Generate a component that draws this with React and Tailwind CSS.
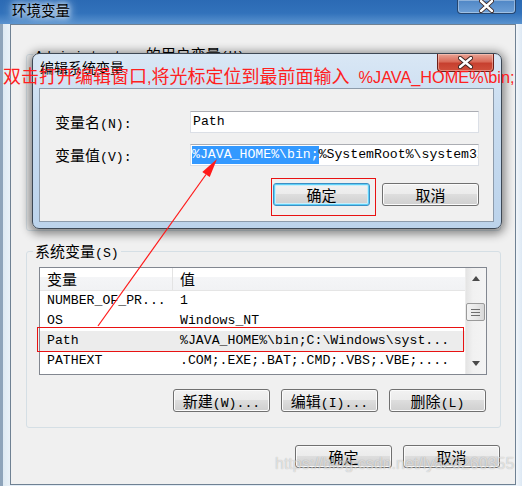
import React from "react";

const CJK = /[\u3000-\u9fff\uff00-\uffef]/;

function W({ t }) {
  const parts = t.match(/[\u3000-\u9fff\uff00-\uffef]+|[^\u3000-\u9fff\uff00-\uffef]+/g) || [];
  return (
    <span className="inline-flex items-baseline h-[16px] leading-[16px] align-top whitespace-pre">
      {parts.map((p, i) =>
        CJK.test(p) ? (
          <span key={i} className="font-['Noto_Sans_CJK_SC',sans-serif] text-[15px] leading-[16px]">
            {p}
          </span>
        ) : (
          <span key={i} className="font-['Liberation_Mono',monospace] text-[13.2px] leading-[16px] whitespace-pre">
            {p}
          </span>
        )
      )}
    </span>
  );
}

function Btn({ t, focus }) {
  return (
    <div
      className={
        focus
          ? "w-[97px] h-[23px] rounded-[3px] border border-[#3c8fc4] shadow-[inset_0_0_0_1px_#5fd0f7,inset_0_0_0_2px_#c9eefb] bg-[linear-gradient(#f2f2f2_0%,#ebebeb_49%,#dddddd_50%,#cfcfcf_100%)] flex items-center justify-center whitespace-nowrap text-black"
          : "w-[97px] h-[23px] rounded-[3px] border border-[#707070] shadow-[inset_0_0_0_1px_#fbfbfb] bg-[linear-gradient(#f2f2f2_0%,#ebebeb_49%,#dddddd_50%,#cfcfcf_100%)] flex items-center justify-center whitespace-nowrap text-black"
      }
    >
      <W t={t} />
    </div>
  );
}

const rows = [
  ["NUMBER_OF_PR...", "1"],
  ["OS", "Windows_NT"],
  ["Path", "%JAVA_HOME%\\bin;C:\\Windows\\syst..."],
  ["PATHEXT", ".COM;.EXE;.BAT;.CMD;.VBS;.VBE;...."],
];

function Scrollbar() {
  return (
    <div className="w-[21px] flex flex-col bg-[linear-gradient(90deg,#e4e4e4_0%,#f1f1f1_35%,#f4f4f4_100%)] border-l border-[#ececec]">
      <div className="h-[17px] flex items-center justify-center pt-[3px]">
        <svg width="8" height="5" viewBox="0 0 8 5">
          <polygon points="0,5 8,5 4,0" fill="#4a4a4a" />
        </svg>
      </div>
      <div className="mt-[18px] w-[19px] h-[18px] rounded-[2px] border border-[#9a9a9a] bg-[linear-gradient(90deg,#f3f3f3_0%,#e9e9e9_50%,#d8d8d8_100%)] flex flex-col items-center justify-center gap-[2px]">
        <div className="w-[9px] h-[1px] bg-[#6e6e6e]" />
        <div className="w-[9px] h-[1px] bg-[#6e6e6e]" />
        <div className="w-[9px] h-[1px] bg-[#6e6e6e]" />
      </div>
      <div className="flex-1" />
      <div className="h-[17px] flex items-center justify-center pb-[4px]">
        <svg width="8" height="5" viewBox="0 0 8 5">
          <polygon points="0,0 8,0 4,5" fill="#4a4a4a" />
        </svg>
      </div>
    </div>
  );
}

function CloseX({ w = 12, h = 10 }) {
  return (
    <svg width={w + 4} height={h + 4} viewBox={`-2 -2 ${w + 4} ${h + 4}`}>
      <path d={`M0 0 L${w} ${h} M${w} 0 L0 ${h}`} stroke="#3a2320" strokeWidth="4.2" strokeLinecap="round" />
      <path d={`M0 0 L${w} ${h} M${w} 0 L0 ${h}`} stroke="#ffffff" strokeWidth="2.4" strokeLinecap="round" />
    </svg>
  );
}

export default function App() {
  return (
    <div className="relative w-[522px] h-[486px] overflow-hidden bg-[#e3edf6] text-black">
      {/* outer title bar */}
      <div className="h-[24px] flex items-start bg-[linear-gradient(180deg,#2b6ab4_0%,#3272bb_55%,#5a93cf_100%)]">
        <div className="ml-[12px] font-['Noto_Sans_CJK_SC',sans-serif] text-[14.5px] leading-[20px] text-black [text-shadow:0_0_5px_#dbe9f7,0_0_9px_#dbe9f7,0_0_12px_#dbe9f7]">
          环境变量
        </div>
        <div className="ml-auto mr-[6px] w-[59px] h-[14px] rounded-b-[4px] border border-t-0 border-[#26466f] bg-[linear-gradient(180deg,#4f86c5_0%,#6d9fd6_100%)] shadow-[inset_0_0_0_1px_rgba(255,255,255,0.35)] flex items-end justify-center overflow-hidden">
          <div className="mt-[-6px]">
            <CloseX w={11} h={10} />
          </div>
        </div>
      </div>

      {/* outer body */}
      <div className="flex h-[462px]">
        <div className="w-[10px] h-full bg-[linear-gradient(90deg,#8ea4ba_0px,#8ea4ba_3px,#dde9f2_3px,#e9f1f7_100%)]" />
        <div className="w-[506px] h-[461px] border border-[#6f8193] bg-[#f0f0f0] flex flex-col pt-[21px] pl-[15px] pr-[14px]">
          {/* user variables group (mostly hidden) */}
          <fieldset className="border border-[#d5dfe5] rounded-[3px]">
            <legend className="ml-[6px] px-[2px] leading-[16px] whitespace-nowrap">
              <W t="Administrator 的用户变量(U)" />
            </legend>
            <div className="h-[168px]" />
          </fieldset>

          {/* system variables group */}
          <fieldset className="mt-[12px] border border-[#d5dfe5] rounded-[3px]">
            <legend className="ml-[6px] px-[2px] leading-[16px] whitespace-nowrap">
              <W t="系统变量(S)" />
            </legend>
            <div className="pt-[8px] pl-[12px] pr-[13px] pb-[15px] flex flex-col">
              <div className="h-[108px] border border-[#828790] bg-white flex overflow-hidden">
                <div className="flex-1 flex flex-col">
                  <div className="h-[23px] shrink-0 flex border-b border-[#e5e5e5] bg-[linear-gradient(180deg,#ffffff_0%,#ffffff_42%,#f4f5f7_43%,#f1f2f4_100%)]">
                    <div className="w-[133px] border-r border-[#e3e3e3] pl-[7px] flex items-center">
                      <W t="变量" />
                    </div>
                    <div className="flex-1 pl-[7px] flex items-center">
                      <W t="值" />
                    </div>
                  </div>
                  {rows.map(([a, b], i) => (
                    <div
                      key={a}
                      className={
                        i === 2
                          ? "h-[20px] shrink-0 flex items-center bg-[#ececec] whitespace-nowrap"
                          : "h-[20px] shrink-0 flex items-center whitespace-nowrap"
                      }
                    >
                      <div className="w-[133px] pl-[7px] flex items-center">
                        <W t={a} />
                      </div>
                      <div className="flex-1 pl-[7px] flex items-center">
                        <W t={b} />
                      </div>
                    </div>
                  ))}
                </div>
                <Scrollbar />
              </div>
              <div className="mt-[14px] flex justify-end gap-[11px] pr-[1px]">
                <Btn t="新建(W)..." />
                <Btn t="编辑(I)..." />
                <Btn t="删除(L)" />
              </div>
            </div>
          </fieldset>

          <div className="mt-[17px] flex justify-end gap-[11px] pr-[1px]">
            <Btn t="确定" />
            <Btn t="取消" />
          </div>
        </div>
        <div className="w-[6px] h-full bg-[linear-gradient(90deg,#f2f6fa_0%,#dce8f4_100%)]" />
      </div>

      {/* edit dialog window (overlapping) */}
      <div className="absolute left-[32px] top-[53px] w-[470px] h-[176px] rounded-[7px] border border-[#3d4855] bg-[linear-gradient(180deg,#d9e7f5_0%,#c8dcf0_35%,#bcd3eb_100%)] shadow-[0_2px_10px_3px_rgba(0,0,0,0.45)] flex flex-col">
        <div className="h-[34px] flex items-start">
          <div className="ml-[7px] mt-[4px] font-['Noto_Sans_CJK_SC',sans-serif] text-[14px] leading-[18px] text-black [text-shadow:0_0_6px_#eef5fb]">
            编辑系统变量
          </div>
          <div className="ml-auto mr-[7px] w-[57px] h-[18px] rounded-b-[4px] border border-t-0 border-[#6b1f19] bg-[linear-gradient(180deg,#e9a394_0%,#d96a58_45%,#c7402f_55%,#d0503c_100%)] shadow-[inset_0_0_0_1px_rgba(255,220,210,0.45)] flex items-center justify-center">
            <CloseX w={11} h={9} />
          </div>
        </div>
        <div className="ml-[6px] mr-[7px] h-[134px] border border-[#8d9bab] bg-[#f0f0f0] flex flex-col pt-[22px] pl-[15px] pr-[14px]">
          <div className="flex items-center h-[22px]">
            <div className="w-[135px] flex items-center whitespace-nowrap">
              <W t="变量名(N):" />
            </div>
            <div className="w-[289px] h-[22px] bg-white border border-[#dbdfe6] border-t-[#abadb3] flex items-center pl-[2px] overflow-hidden whitespace-nowrap">
              <W t="Path" />
            </div>
          </div>
          <div className="mt-[11px] flex items-center h-[22px]">
            <div className="w-[135px] flex items-center whitespace-nowrap">
              <W t="变量值(V):" />
            </div>
            <div className="w-[289px] h-[22px] bg-white border border-[#dbdfe6] border-t-[#abadb3] flex items-stretch pl-[1px] py-[1px] overflow-hidden whitespace-nowrap">
              <span className="flex items-center bg-[#3399ff] text-white">
                <W t="%JAVA_HOME%\bin;" />
              </span>
              <span className="flex items-center">
                <W t="%SystemRoot%\system32;" />
              </span>
            </div>
          </div>
          <div className="mt-[17px] flex justify-end gap-[12px]">
            <Btn t="确定" focus />
            <Btn t="取消" />
          </div>
        </div>
      </div>

      {/* annotation: red caption */}
      <div className="absolute left-[3px] top-[64px] whitespace-nowrap text-[#ff2020] leading-[22px]">
        <span className="font-['Noto_Sans_CJK_SC',sans-serif] text-[18px]">双击打开编辑窗口</span>
        <span className="font-['Liberation_Sans',sans-serif] text-[16.3px]">,</span>
        <span className="font-['Noto_Sans_CJK_SC',sans-serif] text-[18px]">将光标定位到最前面输入</span>
        <span className="ml-[9px] font-['Liberation_Sans',sans-serif] text-[16.3px]">%JAVA_HOME%\bin;</span>
      </div>

      {/* annotation: red boxes */}
      <div className="absolute left-[271px] top-[178px] w-[105px] h-[38px] border border-[#e81212]" />
      <div className="absolute left-[37px] top-[327px] w-[427px] h-[25px] border border-[#e81212]" />

      {/* annotation: red arrow */}
      <svg className="absolute left-0 top-0 pointer-events-none" width="522" height="486" viewBox="0 0 522 486">
        <line x1="98" y1="326" x2="206" y2="174.5" stroke="#ff1a1a" strokeWidth="1.2" />
        <polygon points="217,159 209.7,177.1 202.3,171.9" fill="#ff1a1a" />
      </svg>

      {/* watermark */}
      <div className="absolute left-[275px] top-[454px] whitespace-nowrap font-['Liberation_Sans',sans-serif] text-[16px] leading-[20px] text-white/60 [text-shadow:0_0_1px_rgba(0,0,0,0.3)]">
        https://blog.csdn.net/ly823260355
      </div>
    </div>
  );
}
